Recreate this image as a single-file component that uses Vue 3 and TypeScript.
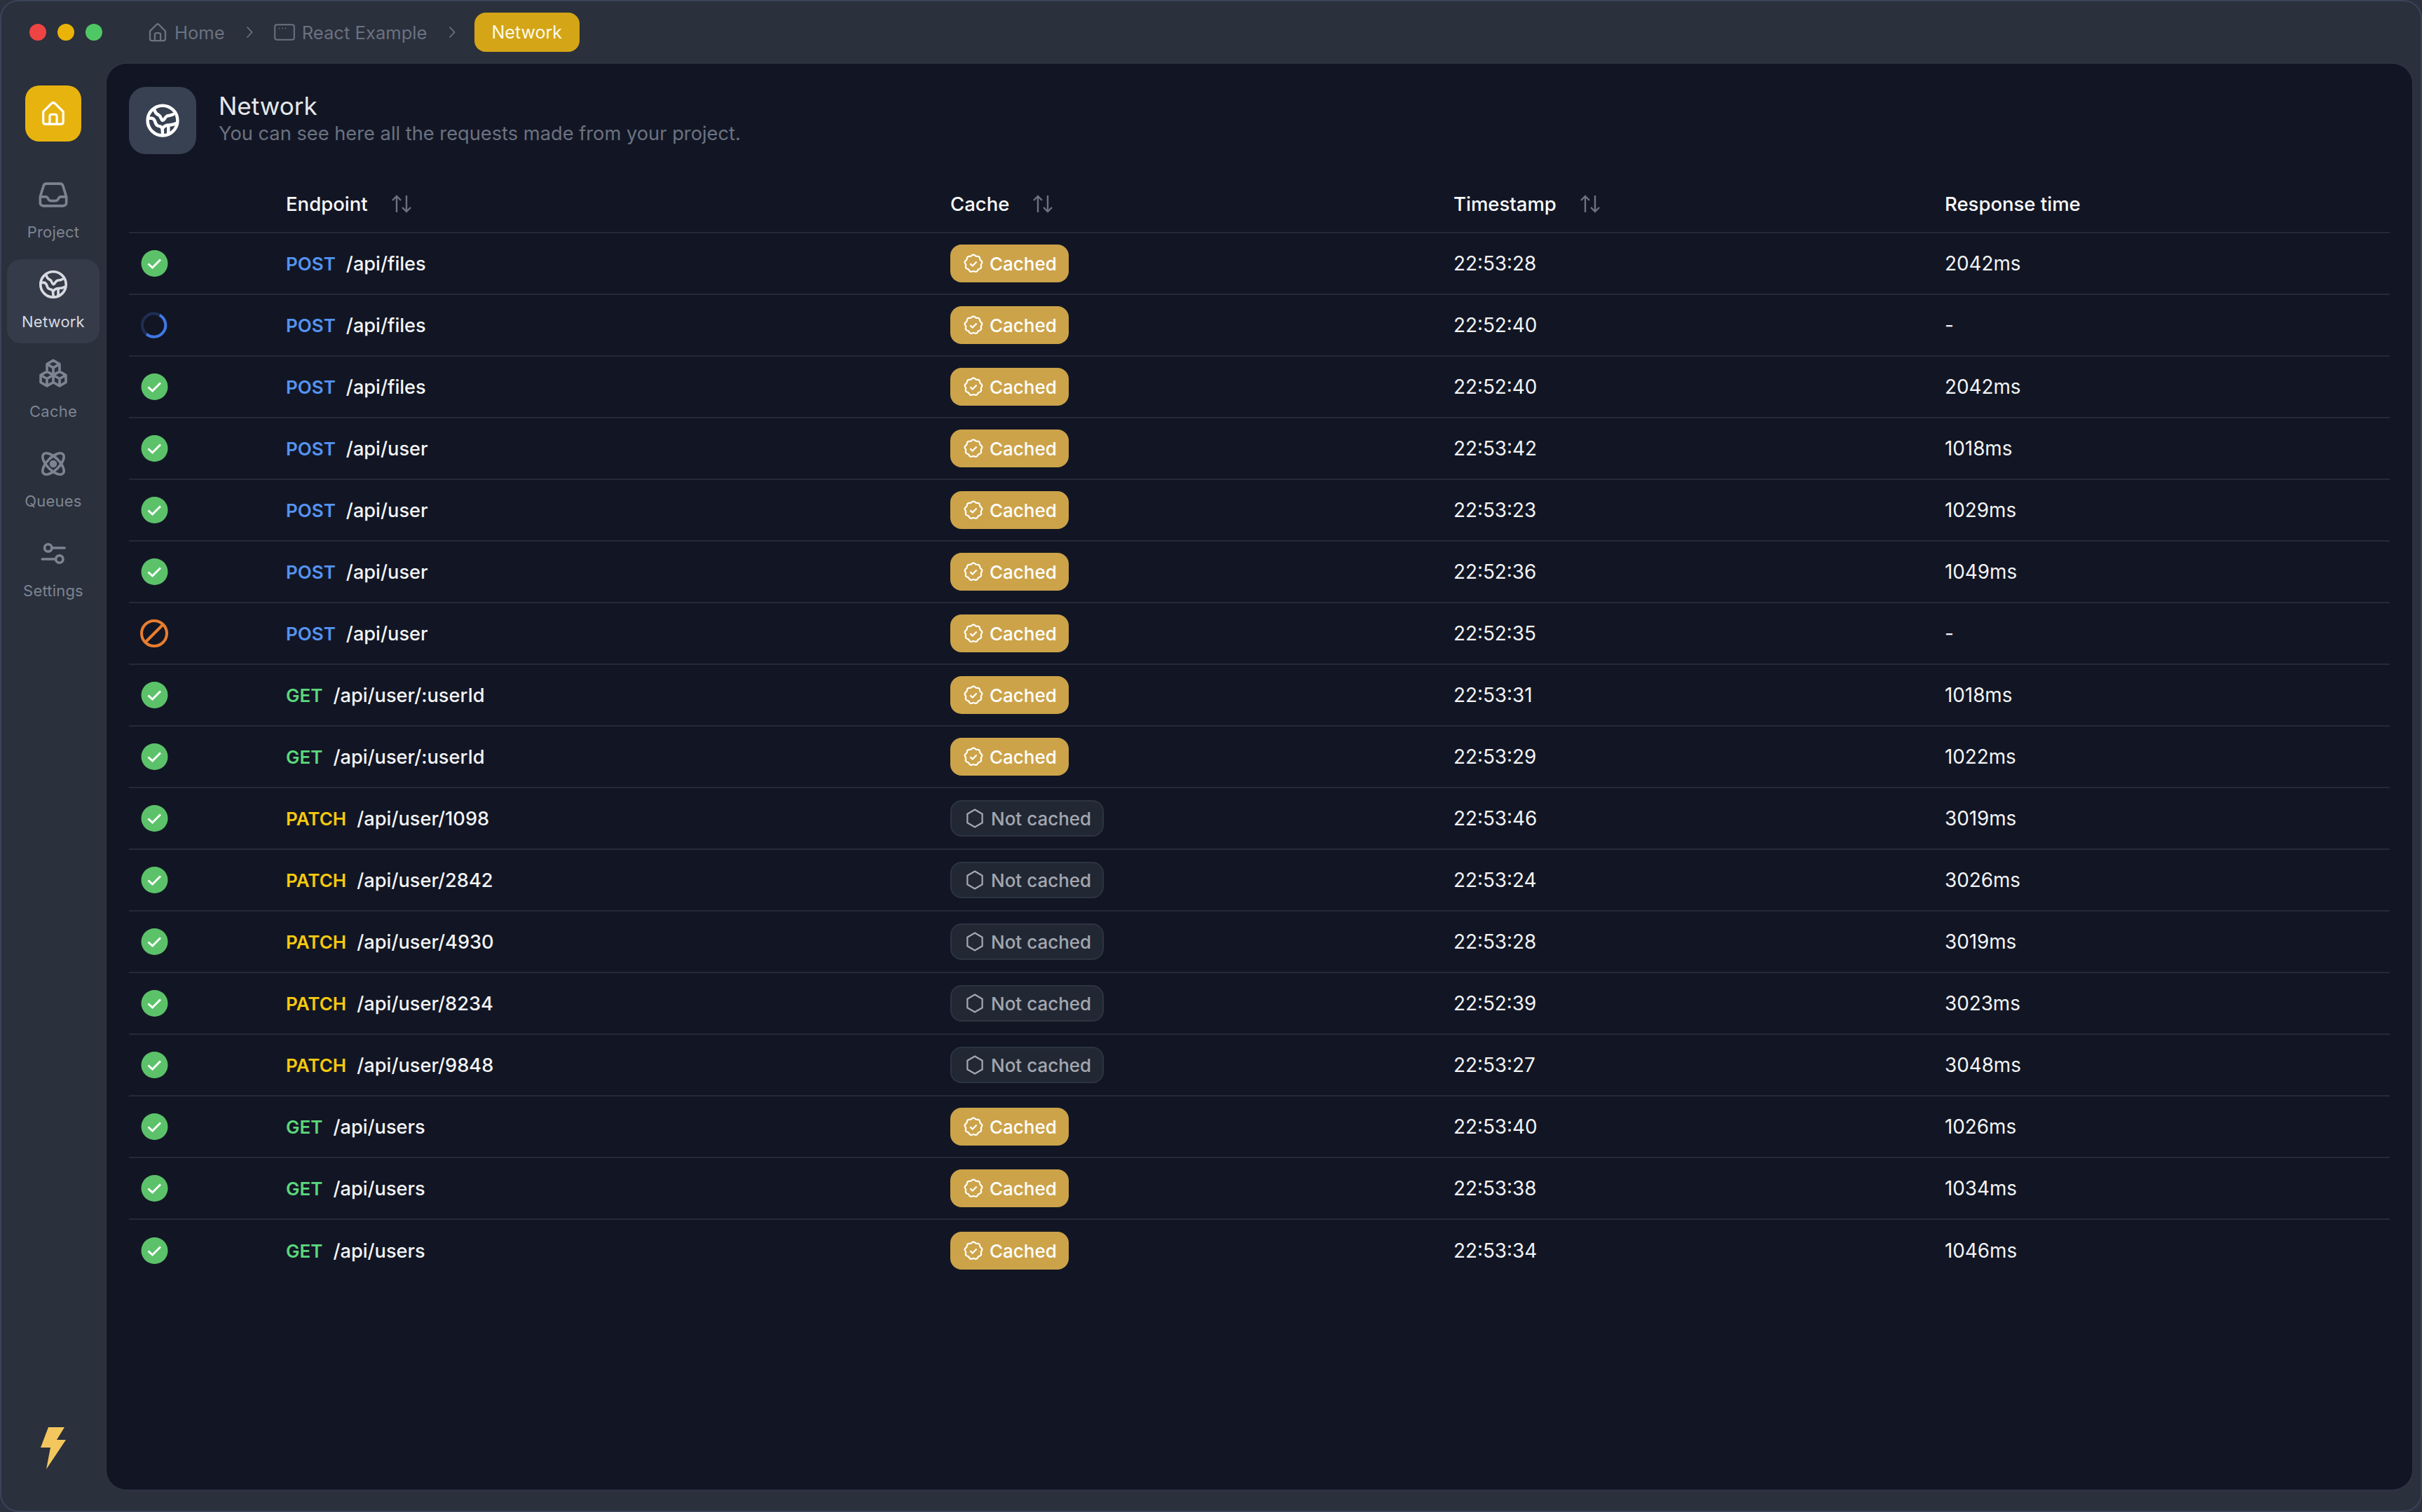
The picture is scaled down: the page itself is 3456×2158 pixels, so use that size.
<script setup lang="ts">
type Status = 'ok' | 'loading' | 'blocked'
interface Row {
  status: Status
  method: 'POST' | 'GET' | 'PATCH'
  path: string
  cached: boolean
  time: string
  ms: string
}

const raw: [Status, Row['method'], string, boolean, string, string][] = [
  ['ok', 'POST', '/api/files', true, '22:53:28', '2042ms'],
  ['loading', 'POST', '/api/files', true, '22:52:40', '-'],
  ['ok', 'POST', '/api/files', true, '22:52:40', '2042ms'],
  ['ok', 'POST', '/api/user', true, '22:53:42', '1018ms'],
  ['ok', 'POST', '/api/user', true, '22:53:23', '1029ms'],
  ['ok', 'POST', '/api/user', true, '22:52:36', '1049ms'],
  ['blocked', 'POST', '/api/user', true, '22:52:35', '-'],
  ['ok', 'GET', '/api/user/:userId', true, '22:53:31', '1018ms'],
  ['ok', 'GET', '/api/user/:userId', true, '22:53:29', '1022ms'],
  ['ok', 'PATCH', '/api/user/1098', false, '22:53:46', '3019ms'],
  ['ok', 'PATCH', '/api/user/2842', false, '22:53:24', '3026ms'],
  ['ok', 'PATCH', '/api/user/4930', false, '22:53:28', '3019ms'],
  ['ok', 'PATCH', '/api/user/8234', false, '22:52:39', '3023ms'],
  ['ok', 'PATCH', '/api/user/9848', false, '22:53:27', '3048ms'],
  ['ok', 'GET', '/api/users', true, '22:53:40', '1026ms'],
  ['ok', 'GET', '/api/users', true, '22:53:38', '1034ms'],
  ['ok', 'GET', '/api/users', true, '22:53:34', '1046ms'],
]
const rows: Row[] = raw.map(([status, method, path, cached, time, ms]) => ({ status, method, path, cached, time, ms }))

const navItems = [
  { key: 'project', label: 'Project' },
  { key: 'network', label: 'Network' },
  { key: 'cache', label: 'Cache' },
  { key: 'queues', label: 'Queues' },
  { key: 'settings', label: 'Settings' },
]

const columns = [
  { label: '', sort: false },
  { label: 'Endpoint', sort: true },
  { label: 'Cache', sort: true },
  { label: 'Timestamp', sort: true },
  { label: 'Response time', sort: false },
]

function cube(cx: number, cy: number, r: number): string {
  const w = r * 0.866
  const h = r / 2
  return `M${cx} ${cy - r}L${cx + w} ${cy - h}V${cy + h}L${cx} ${cy + r}L${cx - w} ${cy + h}V${cy - h}ZM${cx - w} ${cy - h}L${cx} ${cy}L${cx + w} ${cy - h}M${cx} ${cy}V${cy + r}`
}
const cubesPath = cube(12, 7.2, 5.4) + cube(7.3, 15.4, 5.4) + cube(16.7, 15.4, 5.4)

const scallop = (() => {
  const pts: string[] = []
  for (let i = 0; i < 120; i++) {
    const t = (i / 120) * Math.PI * 2
    const r = 9.4 + 0.55 * Math.cos(9 * t)
    pts.push(`${(12 + r * Math.sin(t)).toFixed(2)} ${(12 - r * Math.cos(t)).toFixed(2)}`)
  }
  return `M${pts.join('L')}Z`
})()

const globeLines =
  'M6.9 5.4C7.4 7.6 8.6 8 9.8 8.7C11 9.4 11 11.6 12 11.9C13 12.2 13.4 9.7 14.9 9.1C16 8.7 17 9 18.9 8M2.8 10.6H5C7 10.6 7 12.4 7.7 14C8.4 15.8 10 15.4 11 16C11.9 16.6 12 18 12 21M12 17C13 15.4 14.4 15 15.7 14.9C17 14.8 18.4 14.9 20.4 13.9M15.7 14.9V20'
</script>

<template>
  <div class="window">
    <header class="titlebar">
      <div class="dots">
        <span class="dot red"></span>
        <span class="dot yellow"></span>
        <span class="dot green"></span>
      </div>
      <nav class="crumbs">
        <span class="crumb">
          <svg class="crumb-home" viewBox="0 0 24 24"><path d="M2.6 10.6L10.6 2.6Q12 1.4 13.4 2.6L21.4 10.6V20Q21.4 22.4 19 22.4H5Q2.6 22.4 2.6 20ZM8.5 22.4V15Q8.5 13 10.5 13H13.5Q15.5 13 15.5 15V22.4" /></svg>
          Home
        </span>
        <svg class="chev" viewBox="0 0 10 18"><path d="M1.5 1.5L8.5 9L1.5 16.5" /></svg>
        <span class="crumb">
          <svg class="crumb-win" viewBox="0 0 30 24"><rect x="1.2" y="1.2" width="27.6" height="21.6" rx="3" /><path class="win-dots" d="M6.5 6.5h1.6M11 6.5h1.6M15.5 6.5h1.6" /></svg>
          React Example
        </span>
        <svg class="chev" viewBox="0 0 10 18"><path d="M1.5 1.5L8.5 9L1.5 16.5" /></svg>
        <span class="pill">Network</span>
      </nav>
    </header>

    <div class="body">
      <aside class="sidebar">
        <div class="logo">
          <svg class="logo-icon" viewBox="0 0 24 24"><path d="M3 10.4L10.6 2.8Q12 1.6 13.4 2.8L21 10.4V19.5Q21 21.5 19 21.5H5Q3 21.5 3 19.5ZM8.8 21.5V14.500Q8.8 12.8 10.5 12.8H13.5Q15.2 12.8 15.2 14.5V21.5" /></svg>
        </div>
        <nav class="nav">
          <div v-for="item in navItems" :key="item.key" class="nav-item" :class="{ active: item.key === 'network' }">
            <svg class="nav-icon" viewBox="0 0 24 24">
              <path v-if="item.key === 'project'" d="M2.25 13.5h3.86a2.25 2.25 0 0 1 2.012 1.244l.256.512a2.25 2.25 0 0 0 2.013 1.244h3.218a2.25 2.25 0 0 0 2.013-1.244l.256-.512a2.25 2.25 0 0 1 2.012-1.244h3.859m-19.5.338V18a2.25 2.25 0 0 0 2.25 2.25h15A2.25 2.25 0 0 0 21.75 18v-4.162c0-.224-.034-.447-.1-.661L19.24 5.338A2.25 2.25 0 0 0 17.088 3.75H6.912a2.25 2.25 0 0 0-2.15 1.588L2.35 13.177a2.25 2.25 0 0 0-.1.661Z" />
              <template v-else-if="item.key === 'network'">
                <circle cx="12" cy="12" r="9.5" />
                <path :d="globeLines" />
              </template>
              <path v-else-if="item.key === 'cache'" :d="cubesPath" />
              <template v-else-if="item.key === 'queues'">
                <ellipse cx="12" cy="12" rx="10.2" ry="4.6" transform="rotate(45 12 12)" />
                <ellipse cx="12" cy="12" rx="10.2" ry="4.6" transform="rotate(-45 12 12)" />
                <circle class="filled" cx="12" cy="12" r="1.8" />
              </template>
              <template v-else>
                <circle cx="8.2" cy="7.8" r="2.7" />
                <path d="M11 7.8H20.4M3.8 16.2H13.8" />
                <circle cx="16.6" cy="16.2" r="2.7" />
              </template>
            </svg>
            <span class="nav-label">{{ item.label }}</span>
          </div>
        </nav>
        <svg class="bolt" viewBox="0 0 36 60"><path d="M11 0H34L23 18H36L8 60L14 29H0Z" /></svg>
      </aside>

      <main class="panel">
        <section class="page-head">
          <div class="head-tile">
            <svg class="head-icon" viewBox="0 0 24 24">
              <circle cx="12" cy="12" r="9.5" />
              <path :d="globeLines" />
            </svg>
          </div>
          <div class="head-text">
            <h1>Network</h1>
            <p>You can see here all the requests made from your project.</p>
          </div>
        </section>

        <section class="table">
          <div class="tr th">
            <div v-for="(c, i) in columns" :key="i" class="cell">
              <span>{{ c.label }}</span>
              <svg v-if="c.sort" class="sort" viewBox="0 0 28 26"><path d="M7 25V2M1 8L7 2L13 8M21 1V24M15 18L21 24L27 18" /></svg>
            </div>
          </div>
          <div v-for="(r, i) in rows" :key="i" class="tr">
            <div class="cell">
              <svg v-if="r.status === 'ok'" class="status" viewBox="0 0 40 40">
                <circle class="ok-bg" cx="20.5" cy="20" r="19" />
                <path class="ok-check" d="M11.5 20.5L17.5 26L29 14.5" />
              </svg>
              <svg v-else-if="r.status === 'loading'" class="status" viewBox="0 0 40 40">
                <circle class="spin-track" cx="19.5" cy="20" r="16.5" />
                <path class="spin-arc" d="M27.8 5.8A16.5 16.5 0 1 1 9 32.7" />
              </svg>
              <svg v-else class="status" viewBox="0 0 40 40">
                <circle class="block" cx="20" cy="20" r="18" />
                <path class="block" d="M32.5 7.5L7.5 32.5" />
              </svg>
            </div>
            <div class="cell endpoint">
              <span class="method" :class="r.method.toLowerCase()">{{ r.method }}</span>
              <span class="path">{{ r.path }}</span>
            </div>
            <div class="cell">
              <span v-if="r.cached" class="badge cached">
                <svg class="badge-icon" viewBox="0 0 24 24">
                  <path :d="scallop" />
                  <path d="M8.3 12.3L11 14.8L15.7 10" />
                </svg>
                Cached
              </span>
              <span v-else class="badge uncached">
                <svg class="badge-icon" viewBox="0 0 24 24">
                  <path d="M12 2L20.5 7V17L12 22L3.5 17V7Z" />
                </svg>
                Not cached
              </span>
            </div>
            <div class="cell">{{ r.time }}</div>
            <div class="cell">{{ r.ms }}</div>
          </div>
        </section>
      </main>
    </div>
  </div>
</template>

<style>
html,
body {
  margin: 0;
  background: #2b313e;
  overflow: hidden;
}
</style>

<style scoped>
.window {
  width: 3456px;
  height: 2158px;
  box-sizing: border-box;
  background: #2a303c;
  border: 2px solid #3a4358;
  border-radius: 26px;
  display: flex;
  flex-direction: column;
  font-family: Inter, "Liberation Sans", sans-serif;
  color: #f3f4f6;
  overflow: hidden;
}

.titlebar {
  height: 89px;
  flex: none;
  display: flex;
  align-items: center;
  padding-bottom: 1px;
  box-sizing: border-box;
}
.dots {
  display: flex;
  gap: 16px;
  margin-left: 40px;
}
.dot {
  width: 24px;
  height: 24px;
  border-radius: 50%;
}
.red { background: #ef4444; }
.yellow { background: #eab308; }
.green { background: #4fc764; }

.crumbs {
  display: flex;
  align-items: center;
  margin-left: 65px;
  font-size: 25.6px;
  color: #6b7280;
}
.crumb {
  display: flex;
  align-items: center;
  gap: 10px;
}
.crumb svg,
.chev {
  fill: none;
  stroke: #6b7280;
  stroke-width: 2;
  flex: none;
}
.crumb-home { width: 28px; height: 28px; }
.crumb-win { width: 30px; height: 24px; }
.crumb-win .win-dots { stroke-width: 1.6; }
.chev {
  width: 10px;
  height: 18px;
  margin: 0 30px;
  stroke-width: 1.8;
}
.chev + .crumb + .chev {
  margin-right: 27px;
}
.pill {
  background: #d4a516;
  color: #fef9e8;
  border-radius: 16px;
  padding: 0 25px;
  height: 56px;
  font-size: 25px;
  display: flex;
  align-items: center;
}

.body {
  flex: 1;
  min-height: 0;
  display: flex;
  padding: 0 12px 30px 0;
}
.sidebar {
  width: 150px;
  flex: none;
  display: flex;
  flex-direction: column;
  align-items: center;
  padding: 31px 2px 29px 0;
  box-sizing: border-box;
}
.logo {
  width: 80px;
  height: 80px;
  border-radius: 20px;
  background: #e7b40f;
  display: flex;
  align-items: center;
  justify-content: center;
  flex: none;
}
.logo-icon {
  width: 38px;
  height: 38px;
  fill: none;
  stroke: #fff;
  stroke-width: 2;
}
.nav {
  margin-top: 40px;
  display: flex;
  flex-direction: column;
  gap: 8px;
  flex: 1;
}
.nav-item {
  width: 132px;
  height: 120px;
  border-radius: 20px;
  display: flex;
  flex-direction: column;
  align-items: center;
  padding-top: 13px;
  box-sizing: border-box;
  color: #7d8491;
}
.nav-item.active {
  background: #353b49;
  color: #d7dae0;
}
.nav-icon {
  width: 46px;
  height: 46px;
  fill: none;
  stroke: currentColor;
  stroke-width: 1.9;
  stroke-linejoin: round;
  stroke-linecap: round;
}
.nav-icon .filled {
  fill: currentColor;
}
.nav-label {
  font-size: 22px;
  line-height: 28px;
  margin-top: 16px;
  letter-spacing: 0.2px;
}
.bolt {
  width: 36px;
  height: 60px;
  fill: #f3c75e;
  flex: none;
}

.panel {
  flex: 1;
  min-width: 0;
  background: #121624;
  border-radius: 28px;
  box-shadow: 0 0 0 2px #2d3342;
  padding: 33px 32px 0;
  box-sizing: border-box;
}
.page-head {
  display: flex;
  align-items: center;
  gap: 32px;
}
.head-tile {
  width: 96px;
  height: 96px;
  border-radius: 24px;
  background: #374151;
  display: flex;
  align-items: center;
  justify-content: center;
}
.head-icon {
  width: 54px;
  height: 54px;
  fill: none;
  stroke: #fff;
  stroke-width: 2;
  stroke-linejoin: round;
  stroke-linecap: round;
}
.head-text {
  padding-bottom: 6px;
}
.head-text h1 {
  margin: 0;
  font-size: 35px;
  line-height: 44px;
  font-weight: 400;
  color: #e5e7eb;
}
.head-text p {
  margin: 0;
  font-size: 27.25px;
  line-height: 36px;
  color: #6b7280;
}

.table {
  margin-top: 31px;
}
.tr {
  display: grid;
  grid-template-columns: 224px 948px 718px 701px 1fr;
  height: 88px;
  box-sizing: border-box;
  border-bottom: 2px solid #252a38;
  align-items: center;
  font-size: 27.8px;
  color: #f3f4f6;
}
.tr:last-child {
  border-bottom: 0;
}
.th {
  height: 82px;
  font-size: 27.5px;
  font-weight: 500;
  color: #f9fafb;
}
.cell {
  display: flex;
  align-items: center;
}
.sort {
  width: 28px;
  height: 26px;
  margin-left: 34px;
  fill: none;
  stroke: #6b7280;
  stroke-width: 2.4;
}
.status {
  width: 40px;
  height: 40px;
  margin-left: 16px;
}
.ok-bg { fill: #5cc26a; }
.ok-check {
  fill: none;
  stroke: #fff;
  stroke-width: 3;
}
.spin-track {
  fill: none;
  stroke: #1f2e52;
  stroke-width: 4;
}
.spin-arc {
  fill: none;
  stroke: #3f78e6;
  stroke-width: 4;
}
.block {
  fill: none;
  stroke: #e87d2f;
  stroke-width: 4;
}
.endpoint {
  gap: 15px;
}
.method {
  font-weight: 600;
  font-size: 26px;
}
.post { color: #5593f1; }
.get { color: #5cd67c; }
.patch { color: #f6c90e; }
.path {
  font-size: 27.2px;
  font-weight: 500;
}
.badge {
  display: inline-flex;
  align-items: center;
  gap: 8px;
  font-size: 26px;
  font-weight: 500;
  border-radius: 16px;
  box-sizing: border-box;
}
.badge-icon {
  width: 30px;
  height: 30px;
  fill: none;
  stroke: currentColor;
  stroke-width: 1.8;
  flex: none;
}
.cached {
  height: 54px;
  padding: 0 17px 0 18px;
  background: #cca349;
  color: #fff;
}
.uncached {
  height: 52px;
  padding: 0 16px 0 18px;
  background: #212733;
  border: 2px solid #2d3441;
  color: #a3a7b0;
}
</style>
